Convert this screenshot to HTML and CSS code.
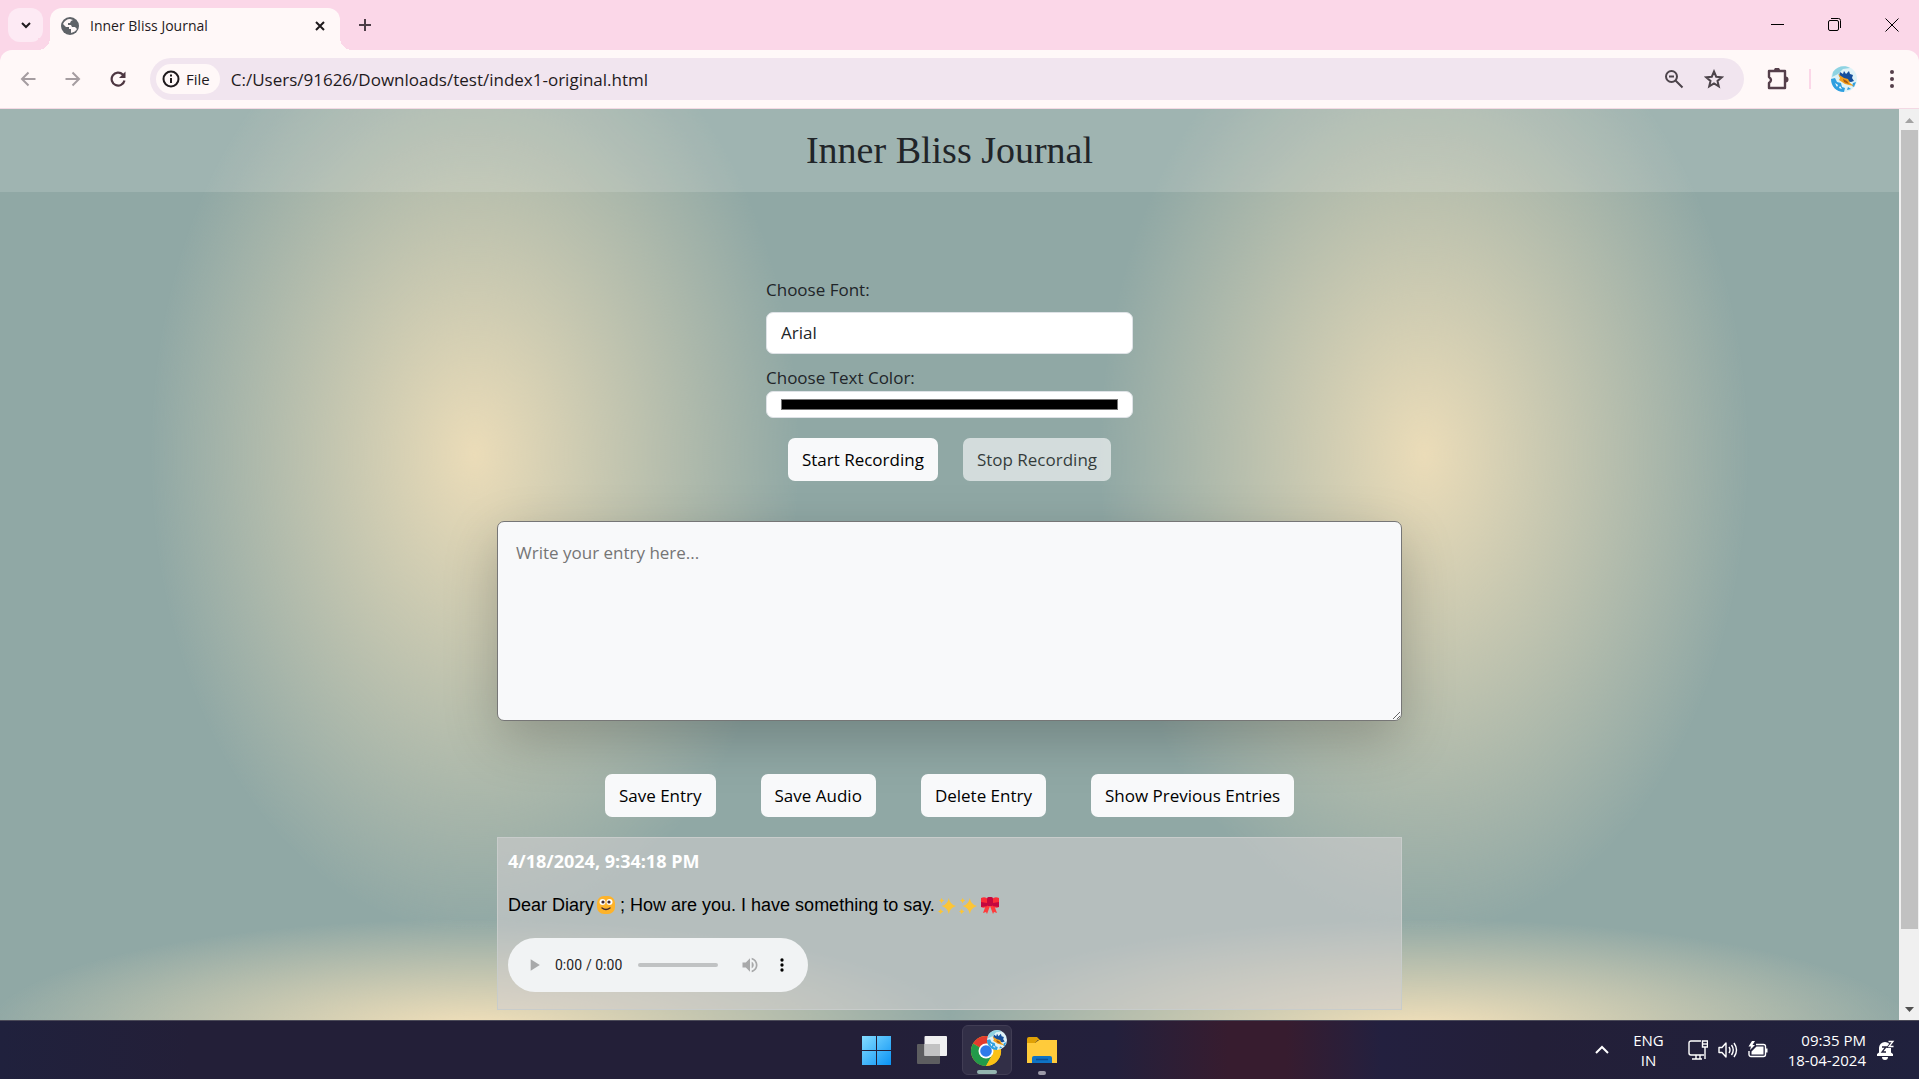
FILE: index.html
```html
<!DOCTYPE html>
<html lang="en">
<head>
<meta charset="utf-8">
<title>Inner Bliss Journal</title>
<link rel="stylesheet" href="styles.css">
</head>
<body>
<svg width="0" height="0" class="defs" aria-hidden="true">
  <defs>
    <symbol id="avatar" viewBox="0 0 26 26">
      <circle cx="13" cy="13" r="13" fill="#dff2f7"/>
      <path d="M2 6C6 0 14-1 19 2l-7 1-5 5-6 3z" fill="#8fd3e2"/>
      <path d="M9 6l3 2 1-3 2 3 3-3 1 3 3 1-1 3 2 3-3 1-5-1-7-5z" fill="#154f9c"/>
      <path d="M0 13l4-1 2 4 4 1 1 4 3 1-1 4C5 26 0 20 0 13zM16 24l1-3 3 2zM21 20l1-3 3-1-2 5z" fill="#2f9fe0"/>
      <path d="M4 17l3 2-1 2zM9 20l2 3-3-1z" fill="#fff"/>
      <path d="M7 8l6 4 4 1 2 4 4 3-5-1-4-1-6-4 1-2z" fill="#f4a01c"/>
      <path d="M12 13l4 2 2 3-5-2z" fill="#a85b12"/>
    </symbol>
    <symbol id="sparkles" viewBox="0 0 20 20">
      <path d="M12 1q1 7 8 9-7 2-8 9-1-7-8-9 7-2 8-9z" fill="#fcc536"/>
      <path d="M4 1q.5 2.500 3 3-2.500.5-3 3-.5-2.500-3-3 2.500-.5 3-3zM3 13q.5 2.500 3 3-2.500.5-3 3-.5-2.500-3-3 2.500-.5 3-3z" fill="#fcc536"/>
    </symbol>
  </defs>
</svg>

<div class="tabstrip">
  <button class="tab-search" aria-label="Search tabs"><svg width="12" height="12" viewBox="0 0 12 12"><path d="M2 4l4 4 4-4" fill="none" stroke="#1f1a1d" stroke-width="2"/></svg></button>
  <div class="tab">
    <svg width="18" height="18" viewBox="0 0 18 18"><circle cx="9" cy="9" r="9" fill="#5f6368"/><path d="M9 2C6 2 3 4 2 7l3 3h3v2h2v4c3-1 5-2 6-4l-2-2h-3l-1-2H7V6h2l1-2 2-1z" fill="#fff8f8"/><path d="M1.500 9.500L6 13v3.500A8 8 0 0 1 1.500 9.500z" fill="#5f6368"/></svg>
    <span class="tab-title">Inner Bliss Journal</span>
    <button class="plain" aria-label="Close tab"><svg width="12" height="12" viewBox="0 0 12 12"><path d="M2 2l8 8M10 2l-8 8" stroke="#1f1a1d" stroke-width="2"/></svg></button>
  </div>
  <button class="plain new-tab" aria-label="New tab"><svg width="14" height="14" viewBox="0 0 14 14"><path d="M7 1v12M1 7h12" stroke="#4d3d47" stroke-width="2"/></svg></button>
  <div class="window-controls">
    <button class="plain" aria-label="Minimize"><svg width="14" height="14" viewBox="0 0 14 14"><path d="M0 6.500h13" stroke="#000"/></svg></button>
    <button class="plain" aria-label="Restore"><svg width="14" height="14" viewBox="0 0 14 14" fill="none" stroke="#000"><rect x=".5" y="2.500" width="10" height="10" rx="1.500"/><path d="M3 .5h7.500a2 2 0 0 1 2 2V10"/></svg></button>
    <button class="plain" aria-label="Close"><svg width="14" height="14" viewBox="0 0 14 14"><path d="M.5.5l13 13M13.500.5l-13 13" stroke="#000"/></svg></button>
  </div>
</div>

<div class="toolbar">
  <div class="nav">
    <button class="plain" aria-label="Back"><svg width="16" height="16" viewBox="0 0 16 16" fill="none" stroke="#a59da1" stroke-width="2"><path d="M15.500 8H2M8.500 1.500L2 8l6.500 6.500"/></svg></button>
    <button class="plain" aria-label="Forward"><svg width="16" height="16" viewBox="0 0 16 16" fill="none" stroke="#a59da1" stroke-width="2"><path d="M.5 8H14M7.500 1.500L14 8l-6.500 6.500"/></svg></button>
    <button class="plain" aria-label="Reload"><svg width="16" height="16" viewBox="0 0 16 16"><path d="M14.500 9.500A6.500 6.500 0 1 1 12.800 3.500L14 5" fill="none" stroke="#4d3641" stroke-width="2.200"/><path d="M15.500.5V7H9z" fill="#4d3641"/></svg></button>
  </div>
  <div class="omnibox">
    <span class="chip"><svg width="18" height="18" viewBox="0 0 18 18"><circle cx="9" cy="9" r="7.500" fill="none" stroke="#1f1a1d" stroke-width="2"/><path d="M9 8v5M9 4.500v2" stroke="#1f1a1d" stroke-width="2"/></svg>File</span>
    <input class="url" type="text" aria-label="Address" value="C:/Users/91626/Downloads/test/index1-original.html">
    <button class="plain" aria-label="Zoom"><svg width="20" height="20" viewBox="0 0 20 20" fill="none" stroke="#4d444b" stroke-width="2"><circle cx="7.500" cy="7.500" r="5.500"/><path d="M11.500 11.500l7 7M5 7.500h5"/></svg></button>
    <button class="plain" aria-label="Bookmark"><svg width="20" height="20" viewBox="0 0 20 20"><path d="M10 2.500l2.200 5.200 5.600.5-4.300 3.700 1.300 5.500-4.800-2.900-4.800 2.900 1.300-5.500L2.200 8.200l5.600-.5z" fill="none" stroke="#4d444b" stroke-width="2"/></svg></button>
  </div>
  <div class="tools">
    <button class="plain" aria-label="Extensions"><svg width="22" height="22" viewBox="0 0 22 22"><path d="M2 3h16v17H2v-5q4-3 0-6z" fill="none" stroke="#553f4b" stroke-width="2.400" stroke-linejoin="round"/><path d="M7 2.500a3 3 0 0 1 6 0zM18.500 8.500a3 3 0 0 1 0 6z" fill="#553f4b"/></svg></button>
    <span class="sep"></span>
    <button class="plain" aria-label="Profile"><svg width="26" height="26"><use href="#avatar"/></svg></button>
    <button class="plain dots" aria-label="Menu"><svg width="4" height="18" viewBox="0 0 4 18" fill="#553f4b"><circle cx="2" cy="2" r="2"/><circle cx="2" cy="9" r="2"/><circle cx="2" cy="16" r="2"/></svg></button>
  </div>
</div>

<div class="viewport">
  <div class="page">
    <header class="page-header"><h1>Inner Bliss Journal</h1></header>
    <main class="journal">
      <form class="settings">
        <label class="font-label" for="font">Choose Font:</label>
        <select id="font" class="field font-select"><option>Arial</option><option>Georgia</option><option>Verdana</option></select>
        <label class="color-label" for="color">Choose Text Color:</label>
        <input id="color" class="field color-input" type="color" value="#000000">
        <div class="recording">
          <button type="button" class="btn">Start Recording</button>
          <button type="button" class="btn" disabled>Stop Recording</button>
        </div>
      </form>
      <textarea class="entry" aria-label="Journal entry" placeholder="Write your entry here..."></textarea>
      <div class="actions">
        <button type="button" class="btn">Save Entry</button>
        <button type="button" class="btn">Save Audio</button>
        <button type="button" class="btn">Delete Entry</button>
        <button type="button" class="btn">Show Previous Entries</button>
      </div>
      <article class="saved">
        <strong>4/18/2024, 9:34:18 PM</strong>
        <p>Dear Diary <svg class="emoji" width="18" height="20" viewBox="1 0 18 20"><rect x="1" y="1" width="18" height="18" rx="7" fill="#fdb32b"/><circle cx="6.500" cy="7" r="3" fill="#fff"/><circle cx="13.500" cy="7" r="3" fill="#fff"/><circle cx="7" cy="7" r="1.600" fill="#402a32"/><circle cx="13" cy="7" r="1.600" fill="#402a32"/><path d="M6 13q4 3 8 0" fill="none" stroke="#402a32" stroke-width="1.400" stroke-linecap="round"/></svg> ; How are you. I have something to say. <svg class="emoji" width="18" height="18"><use href="#sparkles"/></svg> <svg class="emoji" width="18" height="18"><use href="#sparkles"/></svg> <svg class="emoji" width="20" height="20" viewBox="0 0 20 20"><path d="M6 10l-3 8 3-1 1 2 3-8 3 8 1-2 3 1-3-8z" fill="#ff3b3b"/><path d="M1 3q4-2 7 1v7q-4 3-7 1zM19 3q-4-2-7 1v7q4 3 7 1z" fill="#fb2c36"/><path d="M1 7l6 1v3l-6 1zM19 7l-6 1v3l6 1z" fill="#c4083f"/><rect x="7" y="2" width="6" height="9" rx="1.500" fill="#c4083f"/></svg></p>
        <audio controls></audio>
      </article>
    </main>
  </div>
  <div class="scrollbar" aria-hidden="true">
    <svg width="20" height="21" viewBox="0 0 20 21"><path d="M6 14l4.500-5 4.500 5z" fill="#a3a3a3"/></svg>
    <div class="track"><div class="thumb"></div></div>
    <svg width="20" height="21" viewBox="0 0 20 21"><path d="M6 8h9l-4.500 5z" fill="#505050"/></svg>
  </div>
</div>

<div class="taskbar">
  <div class="apps">
    <button class="plain app" aria-label="Start"><svg width="30" height="30" viewBox="0 0 30 30"><defs><linearGradient id="win" x1="0" y1="0" x2="1" y2="1"><stop offset="0" stop-color="#84dcff"/><stop offset="1" stop-color="#0a93f5"/></linearGradient></defs><path d="M0 1h14v14H0zM15 1h14v14H15zM0 16h14v14H0zM15 16h14v14H15z" fill="url(#win)"/></svg></button>
    <button class="plain app" aria-label="Task view"><svg width="30" height="30" viewBox="0 0 30 30"><rect y="9" width="23" height="20" rx="1" fill="#5d5d60"/><rect x="7.500" y="1" width="22.500" height="20" rx="1" fill="#f0f0f1"/><path d="M7.500 9H23v12H7.500z" fill="#c2c2c3"/></svg></button>
    <button class="plain app active" aria-label="Chrome"><svg width="42" height="42" viewBox="0 0 42 42"><circle cx="20" cy="22" r="15" fill="#fbc116"/><path d="M20 22L7 14.500A15 15 0 0 1 33 14.500z" fill="#e33b2e"/><path d="M20 22L7 14.500A15 15 0 0 0 20 37l6.500-11.500z" fill="#229a4a"/><path d="M20 14.500h13A15 15 0 0 1 20 37l6.500-11.500z" fill="#fbc116"/><circle cx="20" cy="22" r="7.500" fill="#fff"/><circle cx="20" cy="22" r="5.800" fill="#2f7bea"/><svg x="21" y="1" width="20" height="20"><use href="#avatar"/></svg></svg></button>
    <button class="plain app running" aria-label="File Explorer"><svg width="30" height="30" viewBox="0 0 30 30"><path d="M0 4a2 2 0 0 1 2-2h8l3 3h-2l-3 3H0z" fill="#e0a106"/><path d="M0 8h8l4-3h18v23H0z" fill="#ffcb3b"/><path d="M5 28v-5a2 2 0 0 1 2-2h16a2 2 0 0 1 2 2v5z" fill="#0f73c4"/><path d="M9 24.500h12" stroke="#0a4f96" stroke-width="1.500"/></svg></button>
  </div>
  <div class="tray">
    <button class="plain" aria-label="Hidden icons"><svg width="14" height="10" viewBox="0 0 14 10"><path d="M1 8l6-6 6 6" fill="none" stroke="#fff" stroke-width="2"/></svg></button>
    <div class="lang">ENG<br>IN</div>
    <div class="status">
      <svg width="20" height="20" viewBox="0 0 20 20" fill="none" stroke="#fff" stroke-width="1.400"><path d="M13 1H3a2 2 0 0 0-2 2v10a2 2 0 0 0 2 2h13M8 15v4M12 15v4M4 19h10"/><path d="M14.500 1h5v6h-5zM17 7v12" /><path d="M15 4h4"/></svg>
      <svg width="20" height="20" viewBox="0 0 20 20" fill="none" stroke="#fff" stroke-width="1.400"><path d="M1 7.500h3l4-4.500v14l-4-4.500H1zM11 7q2 3 0 6M13.500 5q3.500 5 0 10M16 3q5 7 0 14" stroke-linejoin="round"/></svg>
      <svg width="20" height="20" viewBox="0 0 20 20"><path d="M8 4.500h7.500a2 2 0 0 1 2 2v8a2 2 0 0 1-2 2H3a2 2 0 0 1-2-2V11" fill="none" stroke="#fff" stroke-width="1.400"/><path d="M8.500 6.500h7v8h-12v-3zM18 8.500h1.500v4H18zM4 1L.5 6.500h2.500L2 10l5-5H4.500L7 1z" fill="#fff"/></svg>
    </div>
    <div class="clock">09:35 PM<br>18-04-2024</div>
    <svg width="19" height="20" viewBox="0 0 19 20"><path d="M1 16v-2l2-1.500V8a6 6 0 0 1 12 0v4.500l2 1.500v2zM6 17h6a3 3 0 0 1-6 0z" fill="#fff"/><path d="M6 7h4l-4 5h4" fill="none" stroke="#22203a" stroke-width="1.300"/><path d="M12.500 1.500h4.500l-4 5h4.500" fill="none" stroke="#22203a" stroke-width="3"/><path d="M12.500 1.500h4.500l-4 5h4.500" fill="none" stroke="#fff" stroke-width="1.300"/></svg>
  </div>
</div>
</body>
</html>
```
FILE: styles.css
```css
* { box-sizing: border-box; }

body {
  margin: 0;
  min-height: 100vh;
  display: flex;
  flex-direction: column;
  font-family: "Open Sans", "Noto Sans", sans-serif;
  color: #212529;
  background: #fbd7e8;
}

.defs { position: absolute; }

button, input, select, textarea { font: inherit; color: inherit; }

.plain {
  display: flex;
  padding: 0;
  border: 0;
  background: none;
}

/* Tab strip */
.tabstrip {
  display: flex;
  align-items: center;
  height: 50px;
  padding: 0 20px 0 8px;
}
.tab-search {
  display: flex;
  align-items: center;
  justify-content: center;
  width: 35px;
  height: 34px;
  padding: 0;
  border: 0;
  border-radius: 12px;
  background: #fdeaf4;
}
.tab {
  position: relative;
  align-self: flex-end;
  display: flex;
  align-items: center;
  gap: 11px;
  width: 290px;
  height: 42px;
  margin-left: 7px;
  padding: 0 14px 7px 11px;
  border-radius: 12px 12px 0 0;
  background: #fff8f8;
}
.tab::before, .tab::after {
  content: "";
  position: absolute;
  bottom: 0;
  width: 12px;
  height: 12px;
}
.tab::before { right: 100%; background: radial-gradient(circle at 0 0, #fbd7e8 12px, #fff8f8 12px); }
.tab::after { left: 100%; background: radial-gradient(circle at 100% 0, #fbd7e8 12px, #fff8f8 12px); }
.tab-title {
  flex: 1;
  font-size: 14px;
  line-height: 20px;
  color: #1f1a1d;
}
.new-tab { margin-left: 18px; }
.window-controls {
  display: flex;
  gap: 43px;
  margin-left: auto;
}

/* Toolbar */
.toolbar {
  display: flex;
  align-items: center;
  height: 59px;
  padding: 0 25px 0 20px;
  border-bottom: 1px solid #f3d9e4;
  border-radius: 12px 12px 0 0;
  background: #fff8f8;
}
.nav {
  display: flex;
  gap: 29px;
}
.omnibox {
  flex: 1;
  display: flex;
  align-items: center;
  gap: 20px;
  height: 42px;
  margin-left: 24px;
  padding: 0 20px 0 6px;
  border-radius: 21px;
  background: #f1e5ef;
}
.chip {
  display: flex;
  align-items: center;
  gap: 6px;
  height: 30px;
  padding: 0 10px 0 6px;
  border-radius: 15px;
  background: #fff8f8;
  font-size: 15px;
  color: #1f1a1d;
}
.url {
  flex: 1;
  min-width: 0;
  margin-left: -9px;
  padding: 0;
  border: 0;
  outline: 0;
  background: none;
  font-size: 17px;
  color: #1f1a1d;
}
.tools {
  display: flex;
  align-items: center;
  gap: 20px;
  margin-left: 23px;
}
.sep {
  width: 2px;
  height: 20px;
  background: #fbd7e8;
}
.dots { margin-left: 13px; }

/* Web page */
.viewport {
  flex: 1;
  display: flex;
}
.page {
  flex: 1;
  display: flex;
  flex-direction: column;
  font-size: 17px;
  line-height: 26px;
  background-color: #90a8a5;
  background-image:
    radial-gradient(490px 112px at 50% 922px, #ebdcb8 10%, rgba(144, 168, 165, 0)),
    radial-gradient(325px 480px at 50% 345px, #ebdcb8, rgba(144, 168, 165, 0));
  background-size: 50% 100%;
}
.page-header {
  padding: 20px;
  text-align: center;
  background: rgba(255, 255, 255, .14);
}
.page-header h1 {
  margin: 0;
  font-family: "Liberation Serif", serif;
  font-size: 38px;
  font-weight: 400;
  line-height: 43px;
}
.journal {
  display: flex;
  flex-direction: column;
  align-items: center;
  padding: 85px 20px 10px;
}
.settings {
  display: flex;
  flex-direction: column;
  width: 367px;
}
.field {
  width: 100%;
  border: 1px solid #dee2e6;
  border-radius: 7px;
  background: #fff;
}
.font-label { margin-bottom: 9px; }
.font-select {
  height: 42px;
  padding: 0 14px;
  appearance: none;
}
.color-label { margin-top: 11px; }
.color-input {
  height: 27px;
  padding: 7px 14px;
  appearance: none;
}
.color-input::-webkit-color-swatch-wrapper { padding: 0; }
.color-input::-webkit-color-swatch { border: 1px solid #767676; }
.recording {
  display: flex;
  justify-content: center;
  gap: 25px;
  margin-top: 20px;
}
.btn {
  height: 43px;
  padding: 0 14px;
  border: 0;
  border-radius: 7px;
  background: #f8f9fa;
  color: #000;
}
.btn:disabled { opacity: .65; }
.entry {
  width: 905px;
  max-width: 100%;
  height: 200px;
  margin-top: 40px;
  padding: 18px;
  border: 1px solid #767676;
  border-radius: 7px;
  background: #f8f9fa;
  box-shadow: 0 18px 53px rgba(0, 0, 0, .22);
}
.entry::placeholder { color: #757575; }
.actions {
  display: flex;
  gap: 45px;
  margin-top: 53px;
}
.saved {
  width: 905px;
  max-width: 100%;
  margin-top: 20px;
  padding: 10px;
  border: 1px solid #c8cccb;
  background: rgba(211, 208, 210, .55);
}
.saved strong {
  display: block;
  font-size: 18px;
  color: #fff;
}
.saved p {
  margin: 18px 0 20px;
  font-family: "Liberation Sans", sans-serif;
  font-size: 18px;
  color: #000;
}
.emoji {
  margin: 0 0 0 -2px;
  vertical-align: -4px;
}
.saved audio {
  display: block;
  width: 300px;
  height: 54px;
  margin-bottom: 7px;
}
.scrollbar {
  display: flex;
  flex-direction: column;
  width: 20px;
  background: #f0f0f0;
}
.track {
  flex: 1;
  padding: 0 1px 0 2px;
}
.thumb {
  height: 92%;
  background: #c1c1c1;
}

/* Taskbar */
.taskbar {
  display: grid;
  grid-template-columns: 1fr auto 1fr;
  align-items: center;
  height: 59px;
  border-top: 1px solid #4b4a58;
  color: #fff;
  background: linear-gradient(90deg, #20213d, #231f38 10%, #231f38 45%, #23203c 58%, #371c2f 64%, #371c2f 67%, #23203f 72%, #231f38 80%, #20213d);
}
.apps {
  grid-column: 2;
  display: flex;
  gap: 5px;
}
.app {
  position: relative;
  align-items: center;
  justify-content: center;
  width: 50px;
  height: 50px;
  border-radius: 6px;
}
.active {
  border: 1px solid #413d54;
  background: #322f47;
}
.active::after, .running::after {
  content: "";
  position: absolute;
  bottom: 0;
  width: 20px;
  height: 4px;
  border-radius: 2px;
  background: #94b5b0;
}
.running::after {
  width: 8px;
  background: #9c9aa8;
}
.tray {
  display: flex;
  align-items: center;
  justify-content: flex-end;
  gap: 24px;
  padding-right: 24px;
  font-size: 15px;
  line-height: 20px;
}
.lang { text-align: center; }
.status {
  display: flex;
  gap: 10px;
  margin-right: -4px;
}
.clock {
  margin-right: -14px;
  text-align: right;
}
```
